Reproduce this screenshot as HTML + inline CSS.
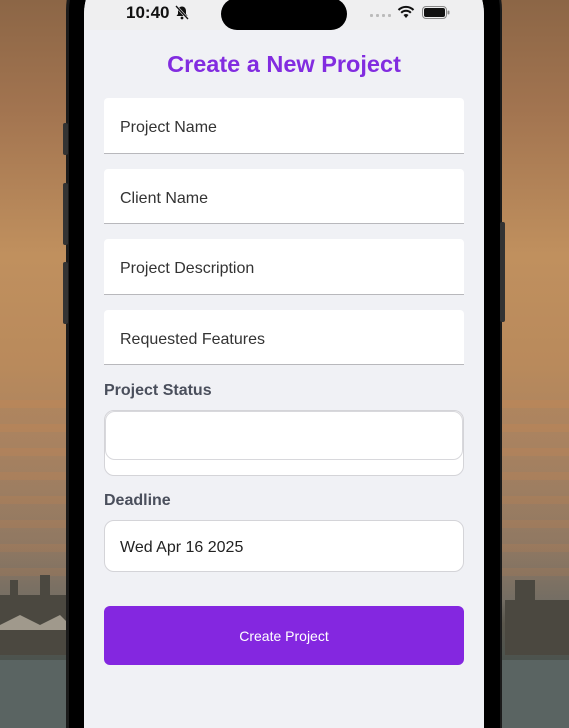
<!DOCTYPE html>
<html><head><meta charset="utf-8">
<style>
*{margin:0;padding:0;box-sizing:border-box}
html,body{width:569px;height:728px;overflow:hidden}
body{position:relative;font-family:"Liberation Sans",sans-serif;
background:linear-gradient(180deg,#8c6646 0%,#a27450 15%,#c0905e 35%,#b98a5c 50%,#a88260 62%,#8f7862 75%,#6b6a64 85%,#4f5a5a 100%);}
.sky{position:absolute;left:0;right:0;top:400px;height:180px;
background:repeating-linear-gradient(180deg,rgba(230,130,60,.12) 0 8px,rgba(150,120,100,.06) 8px 24px)}
.city{position:absolute;left:0;right:0;top:600px;height:60px;background:linear-gradient(180deg,rgba(80,70,60,0),#5a564c 40%,#4c534e)}
.water{position:absolute;left:0;right:0;top:660px;height:68px;background:#5a6462}
.frame{position:absolute;left:66px;top:-60px;width:436px;height:788px;background:#1b1b1b;border-radius:70px 70px 0 0}
.bezel{position:absolute;left:69px;top:-57px;width:431px;height:785px;background:#000;border-radius:68px 68px 0 0}
.btn{position:absolute;left:63px;width:5px;background:#333;border-radius:2px}
.rbtn{position:absolute;left:500px;top:222px;width:5px;height:100px;background:#333;border-radius:2px}
.screen{position:absolute;left:84px;top:-40px;width:400px;height:768px;background:#f0f1f5;border-radius:54px 54px 0 0;overflow:hidden}
.status{position:absolute;left:0;top:0;width:400px;height:70px;background:#efeff0}
.island{position:absolute;left:221px;top:-2px;width:126px;height:32px;background:#000;border-radius:16px}
.time{position:absolute;left:126px;top:3px;font-size:17px;font-weight:bold;color:#111}
h1{position:absolute;left:84px;width:400px;top:51px;text-align:center;font-size:23.5px;font-weight:bold;color:#822ce0}
.f{position:absolute;left:104px;width:360px;background:#fff;border-bottom:1px solid #b8b8bc;border-radius:4px 4px 0 0;font-size:16px;color:#333;padding-left:16px;padding-top:5px;display:flex;align-items:center}
.lbl{position:absolute;left:104px;font-size:16px;font-weight:bold;color:#4a4f5c}
.box{position:absolute;left:104px;width:360px;background:#fff;border:1px solid #d4d4d8;border-radius:10px}
.go{position:absolute;left:104px;top:606px;width:360px;height:59px;background:#8427e0;border-radius:6px;color:#fff;font-size:14px;display:flex;align-items:center;justify-content:center}
</style></head><body>
<div class="sky"></div>
<div class="city"></div>
<svg style="position:absolute;left:0;top:575px" width="569" height="90">
<g fill="#4b4840"><rect x="0" y="20" width="70" height="60"/><rect x="10" y="5" width="8" height="20"/><rect x="40" y="0" width="10" height="30"/><rect x="505" y="25" width="64" height="55"/><rect x="515" y="5" width="20" height="25"/></g>
<g fill="#d8d0c0" opacity=".6"><polygon points="0,50 20,40 40,50 60,40 70,50 70,55 0,55"/></g>
</svg>
<div class="water"></div>
<div class="frame"></div>
<div class="btn" style="top:123px;height:32px"></div>
<div class="btn" style="top:183px;height:62px"></div>
<div class="btn" style="top:262px;height:62px"></div>
<div class="rbtn"></div>
<div class="bezel"></div>
<div class="screen"><div class="status"></div></div>
<div class="island"></div>
<div class="time">10:40</div>
<svg style="position:absolute;left:175px;top:5px" width="14" height="15" viewBox="0 0 14 15"><path d="M7 1.5c-2.5 0-4 2-4 4.5v3L1.5 11h11L11 9V6c0-2.5-1.5-4.5-4-4.5z" fill="#111"/><circle cx="7" cy="13" r="1.4" fill="#111"/><path d="M1 1l12 13" stroke="#efeff0" stroke-width="2.5"/><path d="M1 1l12 13" stroke="#111" stroke-width="1.3"/></svg>
<svg style="position:absolute;left:370px;top:14px" width="22" height="4"><g fill="#bbb"><rect x="0" y="0" width="3" height="3" rx="1"/><rect x="6" y="0" width="3" height="3" rx="1"/><rect x="12" y="0" width="3" height="3" rx="1"/><rect x="18" y="0" width="3" height="3" rx="1"/></g></svg>
<svg style="position:absolute;left:397px;top:5px" width="18" height="14" viewBox="0 0 18 14"><path d="M9 13L6.5 10a3.5 3.5 0 015 0z" fill="#111"/><path d="M4.2 7.8a6.7 6.7 0 019.6 0" stroke="#111" stroke-width="2" fill="none"/><path d="M1.5 5a10.5 10.5 0 0115 0" stroke="#111" stroke-width="2" fill="none"/></svg>
<svg style="position:absolute;left:422px;top:6px" width="28" height="13"><rect x="0.5" y="0.5" width="24" height="12" rx="3.5" fill="none" stroke="#888"/><rect x="2" y="2" width="21" height="9" rx="2" fill="#111"/><rect x="25.5" y="4.5" width="2" height="4" rx="1" fill="#888"/></svg>
<h1>Create a New Project</h1>
<div class="f" style="top:98px;height:56px">Project Name</div>
<div class="f" style="top:169px;height:55px">Client Name</div>
<div class="f" style="top:239px;height:56px">Project Description</div>
<div class="f" style="top:310px;height:55px">Requested Features</div>
<div class="lbl" style="top:382px">Project Status</div>
<div class="box" style="top:410px;height:66px"></div>
<div class="box" style="top:411px;left:105px;width:358px;height:49px;border-color:#d8d8dc"></div>
<div class="lbl" style="top:492px">Deadline</div>
<div class="box" style="top:520px;height:52px;font-size:16px;color:#222;padding-left:15px;padding-top:3px;display:flex;align-items:center">Wed Apr 16 2025</div>
<div class="go">Create Project</div>
</body></html>
